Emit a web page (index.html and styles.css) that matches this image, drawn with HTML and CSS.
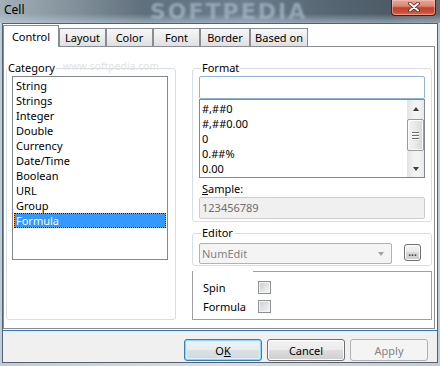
FILE: index.html
```html
<!DOCTYPE html>
<html lang="en">
<head>
    <title>Cell</title>
    <link rel="stylesheet" href="styles.css">
</head>
<body>
    <div class="window">
        <div class="titlebar">
            <span class="title">Cell</span>
            <span class="watermark">SOFTPEDIA</span>
            <button class="close" type="button">
                <svg width="14" height="10" viewBox="0 0 14 10">
                    <path d="M3 1.5 L11 8.5 M11 1.5 L3 8.5" stroke="#5b1f18" stroke-width="3.6" stroke-linecap="round"/>
                    <path d="M3 1.5 L11 8.5 M11 1.5 L3 8.5" stroke="#fff" stroke-width="2" stroke-linecap="round"/>
                </svg>
            </button>
        </div>

        <div class="client">
            <div class="tabs">
                <div class="tab active">Control</div>
                <div class="tab t-layout">Layout</div>
                <div class="tab t-color">Color</div>
                <div class="tab t-font">Font</div>
                <div class="tab t-border">Border</div>
                <div class="tab t-based">Based on</div>
            </div>

            <div class="panel">
                <span class="site-mark">www.softpedia.com</span>

                <div class="group category">
                    <div class="group-label">Category</div>
                    <ul class="listbox">
                        <li>String</li>
                        <li>Strings</li>
                        <li>Integer</li>
                        <li>Double</li>
                        <li>Currency</li>
                        <li>Date/Time</li>
                        <li>Boolean</li>
                        <li>URL</li>
                        <li>Group</li>
                        <li class="selected">Formula</li>
                    </ul>
                </div>

                <div class="right">
                    <div class="group format">
                        <div class="group-label">Format</div>
                        <div class="textbox"></div>
                        <div class="formats">
                            <ul class="format-items">
                                <li>#,##0</li>
                                <li>#,##0.00</li>
                                <li>0</li>
                                <li>0.##%</li>
                                <li>0.00</li>
                            </ul>
                            <div class="scrollbar">
                                <div class="sb-btn"><span class="arrow-up"></span></div>
                                <div class="sb-thumb"><span></span><span></span><span></span></div>
                                <div class="sb-btn"><span class="arrow-down"></span></div>
                            </div>
                        </div>
                        <div class="sample-label"><u>S</u>ample:</div>
                        <div class="sample">123456789</div>
                    </div>

                    <div class="group editor">
                        <div class="group-label">Editor</div>
                        <div class="editor-row">
                            <div class="combo">
                                <span>NumEdit</span>
                                <span class="combo-arrow"></span>
                            </div>
                            <button class="dots" type="button">...</button>
                        </div>
                    </div>

                    <div class="options">
                        <span>Spin</span>
                        <span class="checkbox"></span>
                        <span>Formula</span>
                        <span class="checkbox"></span>
                    </div>
                </div>
            </div>

            <div class="buttons">
                <button class="btn default" type="button">O<u>K</u></button>
                <button class="btn" type="button">Cancel</button>
                <button class="btn disabled" type="button">Apply</button>
            </div>
        </div>
    </div>
</body>
</html>
```

FILE: styles.css
```css
* {
    box-sizing: border-box;
}

body {
    margin: 0;
    width: 440px;
    height: 366px;
    overflow: hidden;
    font-family: "Noto Sans", sans-serif;
    font-size: 11px;
    color: #000;
    background: linear-gradient(90deg, #bccddc, #d3dfe9 50%, #bccddc);
}

.window {
    display: flex;
    flex-direction: column;
    height: 366px;
}

/* title bar */
.titlebar {
    position: relative;
    display: flex;
    align-items: flex-start;
    height: 23px;
    overflow: hidden;
    background:
        linear-gradient(rgba(255, 255, 255, 0) 60%, rgba(196, 212, 226, 0.55)),
        linear-gradient(90deg, #a3b0b9 0%, #7f8e98 18%, #5f6f7b 33%, #6c7e8c 55%, #566672 75%, #4d5c67 88%, #5d6c77 100%);
    background-color: #5d6c77;
}

.title {
    position: relative;
    z-index: 1;
    padding: 2px 0 0 4px;
    font-size: 12px;
    line-height: 15px;
}

.watermark {
    position: absolute;
    left: 150px;
    top: 0;
    font-family: "DejaVu Sans", sans-serif;
    font-size: 22px;
    font-weight: bold;
    line-height: 23px;
    letter-spacing: 2px;
    color: #a8bbcc;
    opacity: 0.7;
    filter: blur(1.3px);
}

.close {
    position: relative;
    margin-left: auto;
    margin-right: 4px;
    width: 45px;
    height: 16px;
    padding: 0 0 2px;
    display: flex;
    align-items: center;
    justify-content: center;
    border: 1px solid #4d1d18;
    border-top: none;
    border-radius: 0 0 4px 4px;
    background: linear-gradient(#e7a698 0%, #db8875 40%, #c4432f 52%, #c64d39 78%, #d96f55 100%);
    box-shadow: inset 0 0 0 1px rgba(255, 210, 200, 0.45);
}

/* client */
.client {
    flex: 1;
    display: flex;
    flex-direction: column;
    margin: 0 2px 3px;
    border: 1px solid #56616b;
    background: #fff;
}

.tabs {
    display: flex;
    align-items: flex-end;
    height: 23px;
    margin-right: 2px;
    border-bottom: 1px solid #898c95;
}

.tab {
    display: flex;
    align-items: center;
    justify-content: center;
    height: 18px;
    border: 1px solid #898c95;
    border-bottom: none;
    background: linear-gradient(#f6f6f6, #ebebeb 55%, #dfdfdf);
    line-height: 15px;
    padding-bottom: 1px;
}

.tab.active {
    width: 56px;
    height: 22px;
    margin-bottom: -1px;
    background: #fff;
    padding-bottom: 0;
}

.t-layout, .t-color, .t-font { width: 47px; }
.t-border { width: 50px; }
.t-based { width: 58px; }

.panel {
    position: relative;
    display: flex;
    gap: 16px;
    height: 282px;
    margin-right: 2px;
    padding: 21px 2px 8px;
    border: 1px solid #898c95;
    border-top: none;
}

.site-mark {
    position: absolute;
    left: 59px;
    top: 12px;
    font-size: 10px;
    color: #e2e2e2;
    letter-spacing: 0.2px;
}

/* group boxes */
.group {
    border: 1px solid #d5dfe5;
    border-radius: 3px;
}

.group-label {
    width: fit-content;
    margin-top: -9px;
    padding: 0 1px;
    line-height: 15px;
    background: #fff;
}

.category {
    width: 170px;
    padding-left: 5px;
}

.category .group-label {
    margin-left: -5px;
}

ul {
    list-style: none;
    margin: 0;
    padding: 0;
}

.listbox {
    width: 156px;
    height: 184px;
    margin-top: 1px;
    padding: 1px;
    border: 1px solid #828790;
}

.listbox li {
    height: 15px;
    padding-left: 1px;
    border: 1px solid transparent;
    line-height: 13px;
}

.listbox li.selected {
    color: #fff;
    border: 1px dotted #1b1b1b;
    background: linear-gradient(#3399ff, #3399ff) padding-box, linear-gradient(#e8912a, #e8912a) border-box;
}

.right {
    width: 240px;
    display: flex;
    flex-direction: column;
}

.format {
    height: 154px;
    padding: 0 6px 2px;
}

.format .group-label,
.editor .group-label {
    margin-left: 2px;
}

.textbox {
    height: 23px;
    margin-top: 1px;
    border: 1px solid #8fb4d6;
    border-radius: 2px;
}

.formats {
    display: flex;
    height: 79px;
    border: 1px solid #828790;
}

.format-items {
    flex: 1;
    padding: 1px 0 1px 2px;
}

.format-items li {
    line-height: 15px;
}

.scrollbar {
    width: 17px;
    display: flex;
    flex-direction: column;
    background: linear-gradient(90deg, #e3e3e3, #f3f3f3 40%, #f3f3f3 70%, #e9e9e9);
}

.sb-btn {
    height: 17px;
    display: flex;
    align-items: center;
    justify-content: center;
}

.sb-btn:last-child {
    margin-top: auto;
}

.arrow-up {
    border-left: 3.5px solid transparent;
    border-right: 3.5px solid transparent;
    border-bottom: 4px solid #3e3e3e;
}

.arrow-down {
    border-left: 3.5px solid transparent;
    border-right: 3.5px solid transparent;
    border-top: 4px solid #3e3e3e;
}

.sb-thumb {
    height: 32px;
    margin: 2px 0 0;
    border: 1px solid #9a9a9a;
    border-radius: 2px;
    background: linear-gradient(90deg, #f5f5f5, #e9e9e9 50%, #d6d6d6);
    box-shadow: inset 0 0 0 1px #fbfbfb;
    display: flex;
    flex-direction: column;
    align-items: center;
    justify-content: center;
    gap: 2px;
}

.sb-thumb span {
    width: 7px;
    height: 1px;
    background: #6f6f6f;
    box-shadow: 0 1px 0 #ffffff;
}

.sample-label {
    margin: 3px 0 0 3px;
    line-height: 15px;
}

.sample {
    height: 22px;
    margin-top: 1px;
    padding-left: 2px;
    border: 1px solid #cdcdcd;
    border-radius: 2px;
    background: #f0f0f0;
    color: #6d6d6d;
    line-height: 20px;
}

.editor {
    height: 33px;
    margin-top: 11px;
    padding: 0 6px 1px;
}

.editor-row {
    display: flex;
    align-items: flex-start;
    margin-top: 3px;
}

.combo {
    width: 193px;
    height: 21px;
    display: flex;
    align-items: center;
    justify-content: space-between;
    padding: 0 7px 0 2px;
    border: 1px solid #b2b2b2;
    border-radius: 2px;
    background: #f4f4f4;
    color: #838383;
}

.combo-arrow {
    border-left: 3.5px solid transparent;
    border-right: 3.5px solid transparent;
    border-top: 4px solid #a3a3a3;
}

.dots {
    width: 17px;
    height: 17px;
    margin: 1px 0 0 12px;
    padding: 0;
    border: 1px solid #707070;
    border-radius: 3px;
    background: linear-gradient(#f4f4f4, #e8e8e8 50%, #d8d8d8 50%, #cdcdcd);
    box-shadow: inset 0 0 0 1px #fbfbfb;
    font-family: "Noto Sans", sans-serif;
    font-size: 10px;
    font-weight: bold;
    line-height: 13px;
    color: #5a2a6a;
}

.options {
    height: 49px;
    margin-top: 5px;
    padding: 7px 0 0 10px;
    border: 1px solid #a0a0a0;
    border-top: none;
    background: linear-gradient(#a0a0a0, #a0a0a0) 60px 0 / 100% 1px no-repeat;
    display: grid;
    grid-template-columns: 55px 13px;
    grid-auto-rows: 19px;
    align-items: center;
    align-content: start;
}

.checkbox {
    width: 13px;
    height: 13px;
    border: 1px solid #8e8f8f;
    background: linear-gradient(135deg, #c9ccd1, #f7f7f7);
    box-shadow: inset 0 0 0 1px #f4f4f4;
}

/* button bar */
.buttons {
    flex: 1;
    display: flex;
    justify-content: flex-end;
    align-items: flex-start;
    gap: 5px;
    margin-top: 1px;
    padding: 8px 9px 0 0;
    border-top: 1px solid #3a74b4;
    background: #f0f0f0;
}

.btn {
    width: 78px;
    height: 22px;
    padding: 0;
    border: 1px solid #707070;
    border-radius: 3px;
    background: linear-gradient(#f2f2f2, #ebebeb 50%, #dddddd 50%, #cfcfcf);
    box-shadow: inset 0 0 0 1px #fcfcfc;
    font-family: "Noto Sans", sans-serif;
    font-size: 11px;
    color: #000;
}

.btn.default {
    border-color: #3c7fb1;
    box-shadow: inset 0 0 0 1px #8ad6f6, inset 0 0 0 2px #d4f0fc;
    background: linear-gradient(#f1f4f6, #e8ecef 50%, #dbe2e7 50%, #d0d8de);
}

.btn.disabled {
    border-color: #adb2b5;
    background: #f4f4f4;
    box-shadow: none;
    color: #838383;
}
```
